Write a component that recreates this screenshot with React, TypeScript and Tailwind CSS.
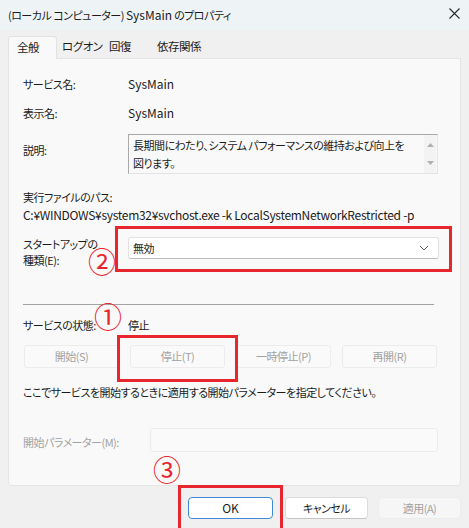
import React from "react";

const tabs = [
  { label: "全般", box: "w-[49px] pl-[8px]", active: true },
  { label: "ログオン", box: "w-[50px] pl-[5px]", active: false },
  { label: "回復", box: "w-[42px] pl-[2px]", active: false },
  { label: "依存関係", box: "w-[64px] pl-[8px]", active: false },
];

const controlButtons = ["開始(S)", "停止(T)", "一時停止(P)", "再開(R)"];

// latin runs are set a bit larger than the japanese text, like Segoe UI next to Yu Gothic UI
const latin = "text-[12px] tracking-normal";

function TitleBar() {
  return (
    <div className="flex h-[30px] items-center justify-between bg-[#eef3f6] pl-2 pr-[9px]">
      <span className="leading-[20px]">
        (ローカル コンピューター) <span className={latin}>SysMain</span> のプロパティ
      </span>
      <svg width="11" height="11" viewBox="0 0 11 11" className="-mt-[3px]">
        <path d="M0.5 0.5L10.5 10.5M10.5 0.5L0.5 10.5" stroke="#2b2b2b" strokeWidth="1.1" />
      </svg>
    </div>
  );
}

function Tabs() {
  return (
    <div className="flex h-[28px] items-end whitespace-nowrap pl-2 text-[11.5px]">
      {tabs.map((tab) =>
        tab.active ? (
          <div
            key={tab.label}
            className={`${tab.box} relative z-10 -mb-px flex h-[23px] shrink-0 items-center rounded-t-[3px] border border-b-0 border-[#e2e2e2] bg-[#f9f9f9]`}
          >
            {tab.label}
          </div>
        ) : (
          <div key={tab.label} className={`${tab.box} flex h-[22px] shrink-0 items-center`}>
            {tab.label}
          </div>
        )
      )}
    </div>
  );
}

function Panel() {
  return (
    <div className="ml-2 h-[428px] w-[453px] rounded-b-[4px] border border-[#e5e5e5] bg-[#f9f9f9] pl-[14px] pt-[15px]">
      <div className="flex h-[20px] items-center">
        <span className="w-[105px]">サービス名:</span>
        <span className={latin}>SysMain</span>
      </div>
      <div className="mt-[9px] flex h-[20px] items-center">
        <span className="w-[105px]">表示名:</span>
        <span className={latin}>SysMain</span>
      </div>
      <div className="mt-[11px] flex">
        <span className="w-[105px] pt-[6px] leading-[20px]">説明:</span>
        <div className="flex h-[40px] w-[310px] border border-[#e3e3e3] border-l-[#a9a9a9] border-t-[#a9a9a9] bg-[#f9f9f9]">
          <div className="flex-1 whitespace-nowrap pl-1 pt-[1px] leading-[18px]">
            長期間にわたり、システム パフォーマンスの維持および向上を
            <br />
            図ります。
          </div>
          <div className="mr-px flex w-[12px] flex-col items-center justify-between bg-[#f3f3f3] py-[8px]">
            <svg width="7" height="4" viewBox="0 0 7 4">
              <path d="M3.5 0L7 4H0z" fill="#b0b0b0" />
            </svg>
            <svg width="7" height="4" viewBox="0 0 7 4">
              <path d="M0 0h7L3.5 4z" fill="#b0b0b0" />
            </svg>
          </div>
        </div>
      </div>
      <div className="mt-[15px] h-[17px] leading-[17px]">実行ファイルのパス:</div>
      <div className="h-[17px] whitespace-nowrap text-[12px] leading-[17px] tracking-[-0.3px]">
        C:¥WINDOWS¥system32¥svchost.exe -k LocalSystemNetworkRestricted -p
      </div>
      <div className="mt-[13px] flex h-[32px]">
        <div className="w-[105px] leading-[16px]">
          スタートアップの
          <br />
          種類(E):
        </div>
        <div className="mt-px flex h-[22px] w-[311px] items-center justify-between rounded-[3px] border border-[#e2e2e2] border-b-[#bdbdbd] bg-white pl-1 pr-[9px]">
          <span>無効</span>
          <svg width="10" height="6" viewBox="0 0 10 6">
            <path d="M1 1l4 4 4-4" stroke="#5a5a5a" strokeWidth="1" fill="none" />
          </svg>
        </div>
      </div>
      <div className="mt-[36px] h-px w-[411px] bg-[#a3a3a3]" />
      <div className="mt-[10px] flex h-[20px] items-center">
        <span className="w-[105px]">サービスの状態:</span>
        <span>停止</span>
      </div>
      <div className="ml-px mt-[10px] flex gap-[11px]">
        {controlButtons.map((b) => (
          <div
            key={b}
            className="flex h-[23px] w-[95px] items-center justify-center rounded-[3px] border border-[#ececec] bg-[#fafafa] text-[#a2a2a2]"
          >
            {b}
          </div>
        ))}
      </div>
      <div className="mt-[14px] flex h-[20px] items-center whitespace-nowrap">
        ここでサービスを開始するときに適用する開始パラメーターを指定してください。
      </div>
      <div className="mt-[26px] flex">
        <span className="mt-[4px] h-[20px] w-[127px] leading-[20px] text-[#a2a2a2]">開始パラメーター(M):</span>
        <div className="h-[24px] w-[288px] rounded-[3px] border border-[#ececec] bg-[#fafafa]" />
      </div>
    </div>
  );
}

function Footer() {
  return (
    <div className="flex justify-end pr-[8px] pt-[11px]">
      <div className={`mr-[12px] flex h-[22px] w-[85px] items-center justify-center rounded-[4px] border border-[#3f8ad6] bg-white ${latin}`}>
        OK
      </div>
      <div className="mr-[10px] flex h-[22px] w-[83px] items-center justify-center rounded-[4px] border border-[#dcdcdc] border-b-[#c4c4c4] bg-white">
        キャンセル
      </div>
      <div className="flex h-[22px] w-[83px] items-center justify-center rounded-[4px] border border-[#ececec] bg-[#f6f6f6] text-[#a2a2a2]">
        適用(A)
      </div>
    </div>
  );
}

export default function App() {
  return (
    <div className="relative h-[528px] w-[469px] overflow-hidden bg-[#f0f0f0] text-[11px] tracking-[-0.5px] text-[#1b1b1b] [font-family:'Noto_Sans_CJK_JP',sans-serif] [font-feature-settings:'palt']">
      <TitleBar />
      <Tabs />
      <Panel />
      <Footer />

      {/* annotations */}
      <div className="absolute left-[115px] top-[226px] h-[46px] w-[337px] border-[3px] border-[#e8262d]" />
      <div className="absolute left-[117px] top-[335px] h-[47px] w-[121px] border-[3px] border-[#e8262d]" />
      <div className="absolute left-[178px] top-[485px] h-[50px] w-[105px] border-[3px] border-[#e8262d]" />
      <span className="absolute left-[94px] top-[302px] text-[28px] leading-[28px] tracking-normal text-[#e8262d]">①</span>
      <span className="absolute left-[88px] top-[247px] text-[28px] leading-[28px] tracking-normal text-[#e8262d]">②</span>
      <span className="absolute left-[153px] top-[455px] text-[28px] leading-[28px] tracking-normal text-[#e8262d]">③</span>
    </div>
  );
}
